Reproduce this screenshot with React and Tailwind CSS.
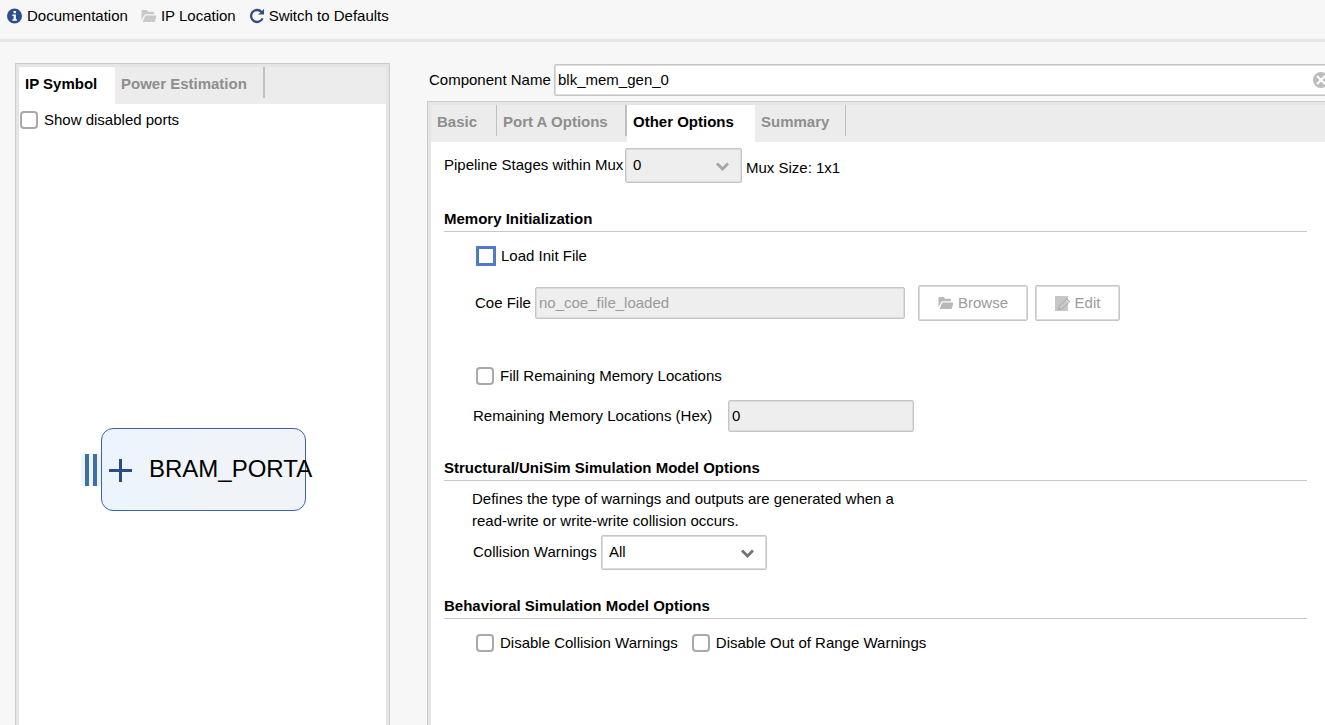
import React, { useState } from 'react';

const InfoIcon = () => (
  <svg width="16" height="16" viewBox="0 0 16 16" aria-hidden="true">
    <circle cx="7.500" cy="8" r="7.500" fill="#2f4f87" />
    <rect x="6.500" y="3" width="2.400" height="2.200" fill="#fff" />
    <path d="M5.400 6.500h3.500v4.800h1v1.400H5.400v-1.400h1.200V7.900H5.400z" fill="#fff" />
  </svg>
);

const FolderIcon = ({ color }) => (
  <svg width="16" height="16" viewBox="0 0 16 16" fill={color} aria-hidden="true">
    <path d="M.5 12V3q0-1 1-1h4q.8 0 1 .8l.3 1H12q1 0 1 1v1.400H4.600q-.9 0-1.300.9z" />
    <path d="M5.200 7.400h9.600q.8 0 .6.7l-1.300 5q-.2.9-1.100.9H2.400q-.8 0-.5-.8l2.200-5.100q.3-.7 1.100-.7z" />
  </svg>
);

const ReloadIcon = () => (
  <svg width="16" height="16" viewBox="0 0 16 16" fill="none" aria-hidden="true">
    <path d="M13.600 10.400A6 6 0 1 1 12.600 4" stroke="#2f4f87" strokeWidth="2.300" />
    <path d="M15 1v5.600H9.200z" fill="#2f4f87" />
  </svg>
);

const EditIcon = () => (
  <svg width="16" height="16" viewBox="0 0 16 16" aria-hidden="true">
    <rect x="0" y="1" width="13" height="15" fill="#c6c6c6" />
    <path d="M3.500 14.500l1-3.800L12 4l2.800 2.600-7.600 7z" fill="#c9c9c9" stroke="#a8a8a8" strokeWidth="1" />
    <path d="M11 5l2.600 2.600" stroke="#e6e6e6" strokeWidth="1" />
  </svg>
);

const ClearIcon = () => (
  <svg width="16" height="16" viewBox="0 0 16 16" aria-hidden="true">
    <circle cx="8" cy="8" r="8" fill="#bdbdbd" />
    <path d="M4 4l8 8M12 4l-8 8" stroke="#fff" strokeWidth="2" />
  </svg>
);

const Tab = ({ label, active, onClick, className }) => (
  <button
    type="button"
    role="tab"
    aria-selected={active}
    onClick={onClick}
    className={`flex pl-1.5 text-left font-bold ${active ? 'h-[37px] bg-white text-black' : 'h-[31px] border-[#c0c0c0] text-[#8e8e8e]'} ${className}`}
  >
    <span className="pt-2 leading-[18px]">{label}</span>
  </button>
);

const CheckBox = ({ label, checked, onChange, focused }) => (
  <label className="flex items-center gap-1.5">
    <input
      type="checkbox"
      checked={checked}
      onChange={onChange}
      className={`size-[18px] shrink-0 appearance-none bg-white checked:bg-[#4f7bc9] ${focused ? 'border-2 border-[#4f7bc9] outline-1 outline-[#4f7bc9]' : 'rounded border-2 border-[#a9a9a9]'}`}
    />
    {label}
  </label>
);

const boxClass = 'rounded-xs border border-[#c6c6c6] inset-ring inset-ring-[#dcdcdc]';
const fieldClass = `${boxClass} h-8 px-[3px] pb-0.5`;
const buttonClass = `${boxClass} flex h-9 items-center justify-center gap-1 bg-white text-[#9b9b9b]`;

const Select = ({ id, options, disabled, className }) => (
  <div className={`relative ${className}`}>
    <select
      id={id}
      disabled={disabled}
      className={`${boxClass} h-[35px] w-full appearance-none px-[7px] pb-0.5 text-black opacity-100 ${disabled ? 'bg-[#eeeeee]' : 'bg-white'}`}
    >
      {options.map((option) => (
        <option key={option}>{option}</option>
      ))}
    </select>
    <svg
      className={`pointer-events-none absolute top-3.5 right-3 ${disabled ? 'text-[#a6a6a6]' : 'text-[#747474]'}`}
      width="14"
      height="10"
      viewBox="0 0 14 10"
      fill="none"
      aria-hidden="true"
    >
      <path d="M1 1.500L6.500 7 12 1.500" stroke="currentColor" strokeWidth="2.800" />
    </svg>
  </div>
);

const SectionTitle = ({ children }) => (
  <h2 className="mt-6 border-b border-[#c8c8c8] font-bold leading-6">{children}</h2>
);

const App = () => {
  const [leftTab, setLeftTab] = useState('symbol');
  const [tab, setTab] = useState('other');
  const [name, setName] = useState('blk_mem_gen_0');
  const [checks, setChecks] = useState({
    ports: false,
    loadInit: false,
    fill: false,
    collision: false,
    range: false
  });

  const toggle = (key) => () => setChecks({ ...checks, [key]: !checks[key] });

  return (
    <div className="flex min-h-screen flex-col overflow-hidden bg-[#f7f7f7] font-['Liberation_Sans',Arial,sans-serif] text-[15px] leading-[18px] text-black">
      <header className="flex h-[42px] items-start gap-[13px] border-b-3 border-[#e6e6e6] pt-[7px] pl-[7px]">
        <button type="button" className="flex items-center gap-1">
          <InfoIcon />
          Documentation
        </button>
        <button type="button" className="flex items-center gap-1">
          <FolderIcon color="#c9c9c9" />
          IP Location
        </button>
        <button type="button" className="flex items-center gap-1">
          <ReloadIcon />
          Switch to Defaults
        </button>
      </header>

      <main className="flex flex-1 items-stretch pl-[15px]">
        <section className="mt-[21px] flex w-[375px] shrink-0 flex-col border border-b-0 border-[#cbcbcb]">
          <div className="flex-1 border-3 border-b-0 border-[#e5e5e5] bg-white">
            <div role="tablist" className="flex h-[37px] bg-[#ececec]">
              <Tab
                label="IP Symbol"
                active={leftTab === 'symbol'}
                onClick={() => setLeftTab('symbol')}
                className="w-24"
              />
              <Tab
                label="Power Estimation"
                active={leftTab === 'power'}
                onClick={() => setLeftTab('power')}
                className="w-[150px] border-r-2"
              />
            </div>
            <div className="pt-[7px] pl-px">
              <CheckBox label="Show disabled ports" checked={checks.ports} onChange={toggle('ports')} />
            </div>
            <div className="mt-[299px] flex items-center pl-[62px]">
              <div className="flex h-8 w-5 gap-1 bg-[#ecf4fe] pl-1">
                <div className="w-1 bg-[#406fa2]" />
                <div className="w-1 bg-[#406fa2]" />
              </div>
              <div className="flex h-[83px] w-[205px] items-center gap-4 rounded-xl border border-[#4063a3] bg-linear-to-r from-[#ebf4fe] to-[#f0f4f8] to-50% pl-[7px]">
                <button type="button" aria-label="Expand" className="shrink-0">
                  <svg width="24" height="24" viewBox="0 0 24 24" aria-hidden="true">
                    <path d="M0 12.500h23M11.500 1v23" stroke="#2f4b85" strokeWidth="3" />
                  </svg>
                </button>
                <span className="pb-0.5 text-2xl">BRAM_PORTA</span>
              </div>
            </div>
          </div>
        </section>

        <section className="mt-[22px] ml-[37px] flex min-w-0 flex-1 flex-col">
          <div className="-mr-3 flex items-center pl-0.5">
            <label htmlFor="componentName" className="w-[125px] shrink-0">
              Component Name
            </label>
            <div className="relative flex-1">
              <input
                id="componentName"
                value={name}
                onChange={(e) => setName(e.target.value)}
                className={`${fieldClass} w-full bg-white`}
              />
              <button
                type="button"
                aria-label="Clear"
                onClick={() => setName('')}
                className="absolute top-2 right-2"
              >
                <ClearIcon />
              </button>
            </div>
          </div>

          <div className="mt-[5px] flex flex-1 flex-col border-t border-l border-[#cbcbcb]">
            <div className="flex-1 border-t-3 border-l-3 border-[#e5e5e5] bg-white">
              <div role="tablist" className="flex h-[37px] bg-[#ececec]">
                <Tab label="Basic" active={tab === 'basic'} onClick={() => setTab('basic')} className="w-[66px] border-r" />
                <Tab
                  label="Port A Options"
                  active={tab === 'portA'}
                  onClick={() => setTab('portA')}
                  className="w-[130px] border-r-2"
                />
                <Tab
                  label="Other Options"
                  active={tab === 'other'}
                  onClick={() => setTab('other')}
                  className="w-32"
                />
                <Tab
                  label="Summary"
                  active={tab === 'summary'}
                  onClick={() => setTab('summary')}
                  className="w-[91px] border-r"
                />
              </div>

              <form onSubmit={(e) => e.preventDefault()} className="pt-1.5 pr-[18px] pl-[13px]">
                <div className="flex items-center">
                  <label htmlFor="pipeline" className="w-[181px] pb-0.5 whitespace-nowrap">
                    Pipeline Stages within Mux
                  </label>
                  <Select id="pipeline" options={['0']} disabled className="w-[117px]" />
                  <span className="pt-1 pl-1">Mux Size: 1x1</span>
                </div>

                <SectionTitle>Memory Initialization</SectionTitle>
                <div className="mt-[15px] ml-[33px]">
                  <CheckBox label="Load Init File" checked={checks.loadInit} onChange={toggle('loadInit')} focused />
                </div>
                <div className="mt-5 ml-[31px] flex items-center">
                  <label htmlFor="coeFile" className="w-[60px]">
                    Coe File
                  </label>
                  <input
                    id="coeFile"
                    value="no_coe_file_loaded"
                    disabled
                    readOnly
                    className={`${fieldClass} w-[370px] bg-[#eeeeee] text-[#9b9b9b]`}
                  />
                  <button type="button" disabled className={`${buttonClass} ml-[13px] w-[110px]`}>
                    <FolderIcon color="#b9b9b9" />
                    Browse
                  </button>
                  <button type="button" disabled className={`${buttonClass} ml-[7px] w-[85px]`}>
                    <EditIcon />
                    Edit
                  </button>
                </div>
                <div className="mt-[46px] ml-8">
                  <CheckBox label="Fill Remaining Memory Locations" checked={checks.fill} onChange={toggle('fill')} />
                </div>
                <div className="mt-[15px] ml-[29px] flex items-center">
                  <label htmlFor="remaining" className="w-[255px]">
                    Remaining Memory Locations (Hex)
                  </label>
                  <input
                    id="remaining"
                    value="0"
                    disabled
                    readOnly
                    className={`${fieldClass} w-[186px] bg-[#eeeeee] text-black`}
                  />
                </div>

                <SectionTitle>Structural/UniSim Simulation Model Options</SectionTitle>
                <p className="mt-[7px] ml-7 max-w-[430px] leading-[22px]">
                  Defines the type of warnings and outputs are generated when a read-write or write-write collision
                  occurs.
                </p>
                <div className="mt-[3px] ml-[29px] flex items-center">
                  <label htmlFor="collision" className="w-32 pb-0.5">
                    Collision Warnings
                  </label>
                  <Select
                    id="collision"
                    options={['All', 'Generate X Only', 'Warning Only', 'None']}
                    className="w-[166px]"
                  />
                </div>

                <SectionTitle>Behavioral Simulation Model Options</SectionTitle>
                <div className="mt-[15px] ml-8 flex gap-3.5">
                  <CheckBox
                    label="Disable Collision Warnings"
                    checked={checks.collision}
                    onChange={toggle('collision')}
                  />
                  <CheckBox
                    label="Disable Out of Range Warnings"
                    checked={checks.range}
                    onChange={toggle('range')}
                  />
                </div>
              </form>
            </div>
          </div>
        </section>
      </main>
    </div>
  );
};

export default App;
